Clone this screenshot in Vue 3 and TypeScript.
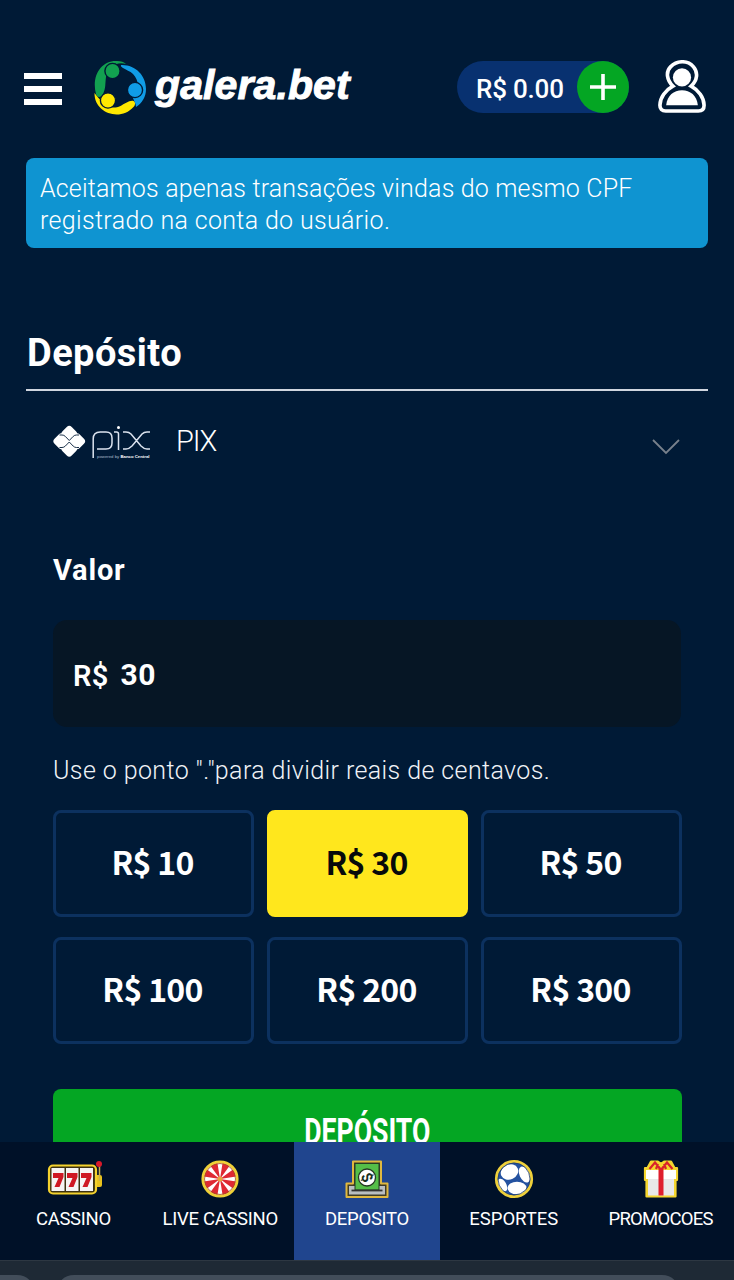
<script setup lang="ts">
import { ref } from 'vue'

const presets: number[] = [10, 30, 50, 100, 200, 300]
const amount = ref<number>(30)
const spokes: number[] = [0, 45, 90, 135, 180, 225, 270, 315]

type Item = { id: string; label: string }
const items: Item[] = [
  { id: 'slots', label: 'CASSINO' },
  { id: 'wheel', label: 'LIVE CASSINO' },
  { id: 'cash', label: 'DEPOSITO' },
  { id: 'ball', label: 'ESPORTES' },
  { id: 'gift', label: 'PROMOCOES' },
]
const active = ref<string>('cash')
</script>

<template>
  <div class="page">
    <header class="header">
      <button class="menu" aria-label="Menu"><i></i><i></i><i></i></button>
      <div class="brand">
        <svg class="brand-mark" width="54" height="56" viewBox="0 0 54 56">
          <path d="M3 35C-2 16 9 1 24 2c4 0 7 1 9 3-9-3-19 3-20 13-1 7 0 11-3 17-2 4-6 4-7 0z" fill="#12a150" />
          <path d="M29 6c14 0 24 11 24 24 0 8-4 14-10 18 0-3-2-6-3-9 7-8 6-18 0-24-3-3-7-4-10-6-2-1-3-3-1-3z" fill="#109ce6" />
          <path d="M1.500 34c2 3 4 5 7 8 7 7 12 8 19 5 4-2 9-6 13-5 2 1 2 4 0 6C27 63 1 54 1.500 34z" fill="#ffe800" />
          <g stroke="#001a36" stroke-width="1.400">
            <circle cx="19.500" cy="12" r="7.600" fill="#12a150" />
            <circle cx="42" cy="31" r="7.600" fill="#109ce6" />
            <circle cx="15" cy="41.500" r="7.600" fill="#ffe800" />
          </g>
        </svg>
        <span class="brand-name">galera.bet</span>
      </div>
      <div class="balance">
        <span class="balance-text">R$ 0.00</span>
        <button class="plus" aria-label="Depositar">
          <svg width="52" height="52" viewBox="0 0 52 52"><path d="M26 13v26M13 26h26" stroke="#fff" stroke-width="3.600" /></svg>
        </button>
      </div>
      <svg class="user" width="48" height="54" viewBox="0 0 50 56">
        <path d="M15.500 27C9 21 8 12 13 7c7-7 18-7 24 0 5 6 4 14-2.500 20C42 31 48 39 48 47c0 4-2 6-6 6H8c-4 0-6-2-6-6 0-8 6-16 13.500-20z" fill="none" stroke="#fff" stroke-width="3.800" />
        <circle cx="25" cy="18" r="9.500" fill="#fff" />
        <path d="M8.500 47c1-10 8-15.500 16.500-15.500S40.500 37 41.500 47z" fill="#fff" />
      </svg>
    </header>

    <div class="notice">
      <p class="n1">Aceitamos apenas transações vindas do mesmo CPF</p>
      <p class="n2">registrado na conta do usuário.</p>
    </div>

    <h1 class="title"><span>Depósito</span></h1>

    <div class="method">
      <svg class="pix" width="98" height="36" viewBox="0 0 98 36">
        <g fill="#fff">
          <rect x="9.750" y="3.250" width="13" height="13" rx="3.500" transform="rotate(45 16.250 9.750)" />
          <rect x="9.750" y="18.250" width="13" height="13" rx="3.500" transform="rotate(45 16.250 24.750)" />
          <rect x="1.750" y="10.750" width="13" height="13" rx="3.500" transform="rotate(45 8.250 17.250)" />
          <rect x="17.750" y="10.750" width="13" height="13" rx="3.500" transform="rotate(45 24.250 17.250)" />
        </g>
        <path d="M6.500 11H9q2 0 3.300 1.400l3.950 4.100 3.950-4.100Q21.500 11 23.500 11H26M6.500 23.500H9q2 0 3.300-1.400l3.950-4.100 3.950 4.100q1.300 1.400 3.300 1.400H26" fill="none" stroke="#001a36" stroke-width=".9" />
        <g fill="none" stroke="#dbe3ef" stroke-width="1.500">
          <path d="M40.200 34V15q0-7 7-7H53q6 0 6 6v5q0 6-6 6h-9" />
          <path d="M61 8h2.500q2 0 2 2v16" />
          <path d="M70 8h3q3 0 5 2l10 12q3 3 6 3h3M97 8h-3q-3 0-5 2L79 22q-3 3-6 3h-3" />
        </g>
        <circle cx="65.500" cy="3.500" r="1.500" fill="#fff" />
        <text x="44" y="33.500" class="pix-small">powered by <tspan class="pix-strong">Banco Central</tspan></text>
      </svg>
      <span class="method-name">PIX</span>
      <svg class="chevron" width="30" height="18" viewBox="0 0 30 18"><path d="M2 2l13 13L28 2" fill="none" stroke="#78818c" stroke-width="1.800" /></svg>
    </div>

    <main class="form">
      <h2 class="label"><span>Valor</span></h2>
      <div class="field"><span class="currency">R$</span><span class="value">{{ amount }}</span></div>
      <p class="hint"><span>Use o ponto "."para dividir reais de centavos.</span></p>
      <div class="presets">
        <button v-for="p in presets" :key="p" class="preset" :class="{ chosen: p === amount }" @click="amount = p">R$ {{ p }}</button>
      </div>
      <button class="submit"><span>DEPÓSITO</span></button>
    </main>

    <nav class="tabs">
      <a v-for="it in items" :key="it.id" class="tab" :class="[it.id, { active: active === it.id }]" @click="active = it.id">
        <svg v-if="it.id === 'slots'" class="slots-icon" width="56" height="40" viewBox="0 0 56 40">
          <path d="M48 16h5q2 0 2 2v8q0 2-2 2h-5z" fill="#eac31c" />
          <path d="M52.500 6v16" stroke="#c9b04a" stroke-width="1.500" />
          <circle cx="52" cy="5" r="3" fill="#d7192a" />
          <rect x="2" y="6.500" width="47" height="28" rx="4" fill="#3d3211" stroke="#f4d22d" stroke-width="2.200" />
          <path d="M4.500 9h13v23h-13zM19 9h12.500v23H19zM33 9h13v23H33z" fill="#f6f4f4" />
          <path d="M6 14h10.500v4l-4 10H7.500l4-9H6zM20 14h10.500v4l-4 10h-5l4-9H20zM34 14h10.500v4l-4 10h-5l4-9H34z" fill="#cf1823" />
        </svg>
        <svg v-else-if="it.id === 'wheel'" width="40" height="40" viewBox="0 0 40 40">
          <circle cx="20" cy="20" r="17.500" fill="#fff" />
          <path v-for="a in spokes" :key="a" d="M20 20L16.200 4h7.600z" :transform="`rotate(${a + 22.5} 20 20)`" fill="#df2933" />
          <circle cx="20" cy="20" r="17.200" fill="none" stroke="#efd137" stroke-width="2.800" />
          <circle cx="20" cy="20" r="15.500" fill="none" stroke="#a84a25" stroke-width=".8" />
          <circle cx="20" cy="20" r="2.500" fill="#e9a63c" />
        </svg>
        <svg v-else-if="it.id === 'cash'" width="44" height="40" viewBox="0 0 44 40">
          <path d="M8 2.500h28v22h6.500V38h-41V24.500H8z" fill="#403c27" stroke="#e0b83f" stroke-width="2" stroke-linejoin="round" />
          <path d="M4 27h36v8.500H4z" fill="#b9bec1" />
          <path d="M10 4.500h24V31H10z" fill="#55bf48" stroke="#253d22" />
          <path d="M6.500 31.500h31" stroke="#333" stroke-width="1.800" />
          <circle cx="22" cy="18.500" r="8.500" fill="#fff" stroke="#263923" stroke-width="1.300" />
          <text x="22" y="23.800" class="coin" transform="rotate(65 22 18.500)">$</text>
        </svg>
        <svg v-else-if="it.id === 'ball'" width="40" height="40" viewBox="0 0 40 40">
          <circle cx="20" cy="20" r="17" fill="#2452a0" />
          <g fill="#fff">
            <ellipse cx="15.500" cy="13" rx="9" ry="7.500" transform="rotate(-25 15.500 13)" />
            <ellipse cx="30.500" cy="15.500" rx="5" ry="8.500" transform="rotate(-25 30.500 15.500)" />
            <ellipse cx="23" cy="29" rx="9.500" ry="6.300" />
            <ellipse cx="8.500" cy="26" rx="3.800" ry="7" transform="rotate(-30 8.500 26)" />
          </g>
          <circle cx="20" cy="20" r="17.700" fill="none" stroke="#efd03a" stroke-width="2.800" />
          <circle cx="20" cy="20" r="16" fill="none" stroke="#233d69" stroke-width=".8" />
        </svg>
        <svg v-else width="36" height="40" viewBox="0 0 36 40">
          <path d="M8 2.500h6.500L18 5l3.500-2.500H28L31.500 9H34v12h-1.500v16.500h-29V21H2V9h2.500z" fill="#f5d62f" stroke="#f5d62f" stroke-width="2.200" stroke-linejoin="round" />
          <path d="M3 11h30v9H3z" fill="#fff" />
          <path d="M5 20h26v16.500H5z" fill="#e9e8e9" />
          <path d="M15.500 9h5v27.500h-5z" fill="#df1e2d" />
          <path d="M17 9.500L12 3.500 6.500 10M19 9.500l5-6L29.500 10M13 10l2-5M23 10l-2-5" fill="none" stroke="#d9232b" stroke-width="2.200" />
        </svg>
        <span class="tab-label">{{ it.label }}</span>
      </a>
    </nav>

    <div class="browser"><i class="pill-left"></i><i class="pill-main"></i></div>
  </div>
</template>

<style>
body { background: #001a36; }
</style>

<style scoped>
.page {
  width: 734px;
  height: 1280px;
  display: flex;
  flex-direction: column;
  overflow: hidden;
  background: #001a36;
  color: #fff;
  font-family: Roboto, "Liberation Sans", sans-serif;
}
button { border: 0; padding: 0; margin: 0; background: none; color: inherit; font-family: inherit; }
p, h1, h2 { margin: 0; white-space: nowrap; }
svg { display: block; flex: none; }
.header { height: 158px; padding: 59px 27px 0 24px; display: flex; align-items: flex-start; box-sizing: border-box; flex: none; }
.menu { width: 38px; margin-top: 14px; display: grid; gap: 7px; }
.menu i { height: 6px; background: #fff; }
.brand { display: flex; margin-left: 31px; width: 364px; }
.brand-name { margin-left: 8px; font: italic 700 41px/52px "Liberation Sans", sans-serif; letter-spacing: .1px; -webkit-text-stroke: 1px #fff; }
.balance { width: 172px; height: 52px; margin-top: 2px; border-radius: 26px; background: #083170; display: flex; align-items: center; justify-content: space-between; }
.balance-text { margin-left: 19px; font-size: 26px; font-weight: 500; letter-spacing: -.2px; white-space: nowrap; padding-top: 3px; }
.plus { width: 52px; height: 52px; border-radius: 50%; background: #04a623; }
.user { margin: 1px 0 0 29px; }
.notice { flex: none; box-sizing: border-box; height: 90px; margin: 0 26px; padding: 15px 14px; border-radius: 8px; background: #0f94d1; font-size: 25px; line-height: 32px; font-weight: 300; }
.n1 { letter-spacing: .17px; }
.n2 { letter-spacing: .34px; }
.title { flex: none; height: 58px; margin: 0 26px; padding: 83px 0 0 1px; border-bottom: 2px solid #d0d6df; font-size: 38px; line-height: 44px; font-weight: 700; letter-spacing: .45px; }
.method { flex: none; height: 161px; padding: 33px 53px 0; display: flex; align-items: flex-start; box-sizing: border-box; }
.method-name { margin: -1px 0 0 25px; font-size: 29px; line-height: 36px; font-weight: 300; letter-spacing: -1.2px; }
.chevron { margin: 14px 0 0 auto; }
.form { flex: none; height: 590px; padding: 0 53px; overflow: hidden; }
.label { height: 68px; font-size: 29px; line-height: 36px; font-weight: 700; letter-spacing: .8px; }
.field { height: 107px; border-radius: 14px; background: #061625; display: flex; align-items: center; padding-left: 20px; box-sizing: border-box; font-size: 30px; font-weight: 700; }
.currency { font-weight: 600; font-size: 29px; letter-spacing: .3px; padding-top: 5px; }
.value { margin-left: 12px; padding-top: 1px; letter-spacing: .5px; }
.hint { height: 83px; padding-top: 27px; box-sizing: border-box; font-size: 25px; line-height: 34px; font-weight: 300; letter-spacing: .4px; color: #f0f3f7; }
.presets { display: grid; grid-template-columns: repeat(3, 201px); grid-auto-rows: 107px; gap: 20px 13px; }
.preset { border: 3px solid #0c315f; border-radius: 8px; box-sizing: border-box; padding: 0 2px 6px 0; font: 700 32px/46px "Noto Sans CJK JP", "Noto Sans", sans-serif; letter-spacing: -.7px; white-space: nowrap; }
.preset.chosen { background: #ffe71d; border-color: #ffe71d; color: #070a0b; }
.submit { display: flex; justify-content: center; width: 629px; height: 100px; margin-top: 45px; background: #04a623; border-radius: 8px; font-weight: 700; font-size: 36px; line-height: 42px; padding-top: 22px; }
.submit span { transform: scaleX(.74); }
.tabs { flex: none; height: 118px; display: grid; grid-template-columns: repeat(5, 1fr); background: #001128; }
.tab { display: flex; flex-direction: column; align-items: center; padding-top: 17px; white-space: nowrap; }
.tab.active { background: #20458e; }
.slots-icon { margin-left: 4px; }
.tab-label { font-size: 18.500px; line-height: 24px; margin-top: 8px; letter-spacing: -.3px; }
.ball .tab-label { letter-spacing: 0; }
.gift .tab-label { letter-spacing: -.75px; }
.browser { position: relative; flex: none; height: 20px; background: #1e2935; border-top: 1px solid #2d3742; box-sizing: border-box; overflow: hidden; }
.pill-left, .pill-main { position: absolute; top: 14px; height: 40px; border-radius: 18px; background: #424d5a; }
.pill-left { left: -40px; width: 75px; }
.pill-main { left: 56px; width: 624px; }
.pix-small { font: 4.300px "Liberation Sans", sans-serif; fill: #aab8ca; }
.pix-strong { font-weight: 700; fill: #fff; }
.coin { font: 700 15px Roboto, sans-serif; text-anchor: middle; fill: #173020; }
</style>
